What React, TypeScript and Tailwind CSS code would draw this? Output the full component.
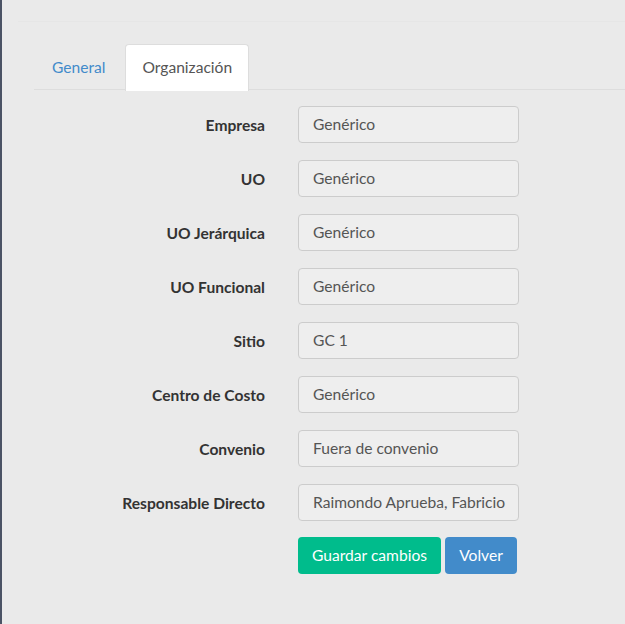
import React from 'react';

const fields = [
  { label: 'Empresa', value: 'Genérico' },
  { label: 'UO', value: 'Genérico' },
  { label: 'UO Jerárquica', value: 'Genérico' },
  { label: 'UO Funcional', value: 'Genérico' },
  { label: 'Sitio', value: 'GC 1' },
  { label: 'Centro de Costo', value: 'Genérico' },
  { label: 'Convenio', value: 'Fuera de convenio' },
  { label: 'Responsable Directo', value: 'Raimondo Aprueba, Fabricio' },
];

const App: React.FC = () => {
  return (
    <div
      className="w-full h-[624px] bg-[#eaeaea] border-l-2 border-[#4b5365] overflow-hidden text-[15.6px]"
      style={{ fontFamily: 'Lato, "Open Sans", sans-serif' }}
    >
      {/* linea superior tenue */}
      <div className="mt-[21px] ml-[16px] border-t border-[#e6e6e6]"></div>

      <div className="pl-[32px] pt-[22px]">
        {/* Pestañas */}
        <div className="flex gap-[4px] border-b border-[#dddddd] h-[46px]">
          <div className="h-[46px] pl-[18px] pr-[16px] pt-[1px] flex items-center text-[#428bca]">General</div>
          <div className="h-[47px] px-[16px] flex items-center bg-white border border-[#dddddd] border-b-0 rounded-t-[4px] text-[#555555]">
            Organización
          </div>
        </div>

        {/* Formulario */}
        <div className="flex flex-col gap-[17px] pt-[16px]">
          {fields.map((f) => (
            <div key={f.label} className="flex items-center">
              <div className="w-[231px] text-right font-bold text-[#333333] pt-[2px]">{f.label}</div>
              <div className="ml-[33px] w-[221px] h-[37px] flex items-center pl-[14px] pt-[1px] bg-[#eeeeee] border border-[#cccccc] rounded-[4px] text-[#555555] whitespace-nowrap overflow-hidden">
                {f.value}
              </div>
            </div>
          ))}
          <div className="flex gap-[4px] ml-[264px] -mt-[1px]">
            <button className="w-[143px] h-[37px] pt-[1px] bg-[#00bc8c] text-white rounded-[4px]">Guardar cambios</button>
            <button className="w-[72px] h-[37px] pt-[1px] bg-[#428bca] text-white rounded-[4px]">Volver</button>
          </div>
        </div>
      </div>
    </div>
  );
};

export default App;
